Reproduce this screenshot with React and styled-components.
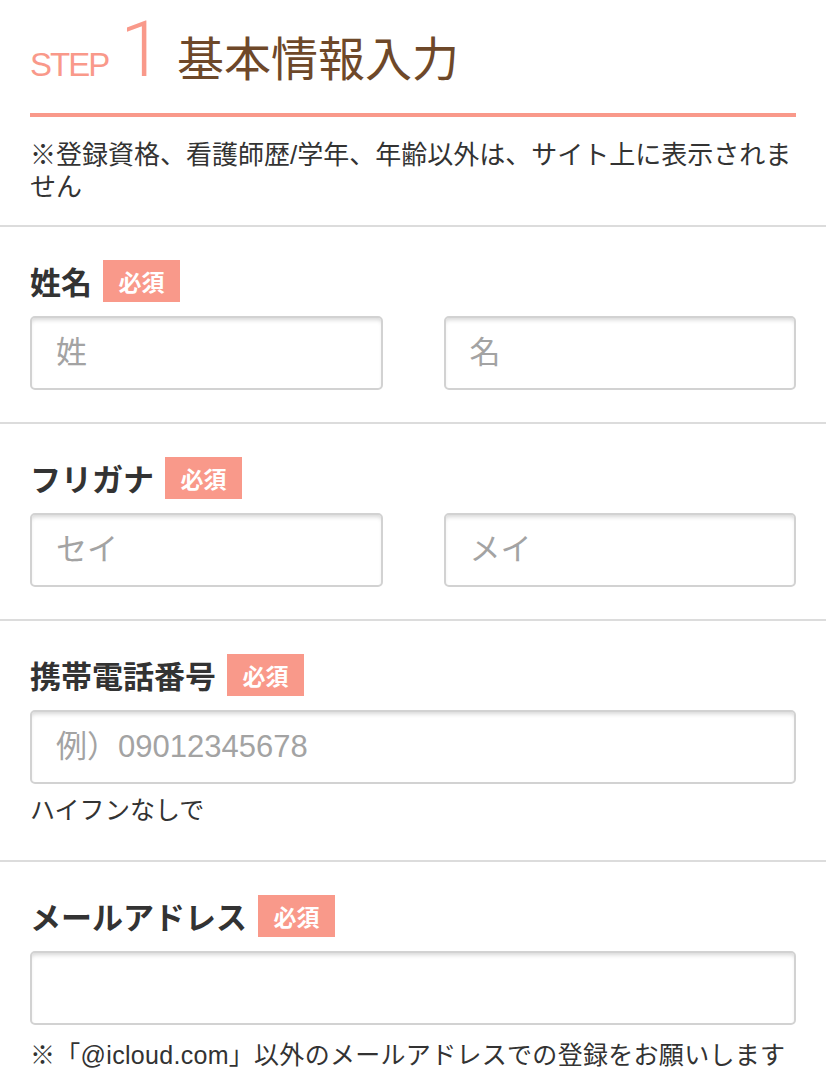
import styled, { createGlobalStyle } from "styled-components"

const GlobalStyle = createGlobalStyle`
  html, body {
    margin: 0;
    padding: 0;
    background: #fff;
  }
  body {
    font-family: "Liberation Sans", "Noto Sans CJK JP", sans-serif;
    color: #333;
  }
`

const Page = styled.div`
  width: 826px;
  background: #fff;
`

const Header = styled.header`
  padding: 0 30px 22px;
`

const Heading = styled.h1`
  display: flex;
  align-items: baseline;
  margin: 0;
  padding-top: 12px;
  height: 117px;
  box-sizing: border-box;
  border-bottom: 4px solid #f9998a;
  font-weight: normal;
`

const StepLabel = styled.span`
  font-family: "Liberation Sans", sans-serif;
  font-size: 33px;
  letter-spacing: -2px;
  color: #f9998a;
  line-height: 1;
`

const StepNum = styled.span`
  font-family: Roboto, "Liberation Sans", sans-serif;
  font-weight: 300;
  font-size: 77px;
  color: #f9998a;
  line-height: 1;
  margin: 0 14px 0 12px;
`

const Title = styled.span`
  font-family: "Noto Sans CJK JP", sans-serif;
  font-size: 47px;
  color: #6e4829;
  line-height: 1;
`

const Lead = styled.p`
  margin: 22px 0 0;
  font-size: 26px;
  line-height: 32px;
  color: #333;
`

const Section = styled.section`
  border-top: 2px solid #dcdcdc;
  padding: 33px 30px 32px;
`

const LabelRow = styled.div`
  display: flex;
  align-items: center;
  gap: 11px;
`

const Label = styled.span`
  font-family: "Noto Sans CJK JP", sans-serif;
  font-size: 31px;
  font-weight: 700;
  color: #333;
  line-height: 42px;
`

const Badge = styled.span`
  display: inline-flex;
  align-items: center;
  justify-content: center;
  width: 77px;
  height: 42px;
  background: #f9998a;
  color: #fff;
  font-family: "Noto Sans CJK JP", sans-serif;
  font-size: 23px;
  font-weight: 700;
`

const Fields = styled.div`
  display: grid;
  grid-template-columns: ${props => props.split ? "1fr 1fr" : "1fr"};
  gap: 61px;
  margin-top: 14px;
`

const Input = styled.input`
  box-sizing: border-box;
  width: 100%;
  height: 74px;
  border: 2px solid #d2d2d2;
  border-radius: 5px;
  box-shadow: inset 0 4px 4px -2px rgba(0, 0, 0, 0.16);
  padding: 0 24px;
  font-family: "Liberation Sans", "Noto Sans CJK JP", sans-serif;
  font-size: 31px;
  color: #333;
  background: #fff;
  outline: none;

  &::placeholder {
    color: #a3a3a3;
  }
`

const Hint = styled.p`
  margin: ${props => props.gap}px 0 0;
  font-size: 25px;
  letter-spacing: ${props => props.spread || 0}px;
  line-height: 36px;
  color: #333;
  white-space: nowrap;
`

const Field = ({ label, children }) => (
  <Section>
    <LabelRow>
      <Label>{label}</Label>
      <Badge>必須</Badge>
    </LabelRow>
    {children}
  </Section>
)

export default function App() {
  return (
    <Page>
      <GlobalStyle />
      <Header>
        <Heading>
          <StepLabel>STEP</StepLabel>
          <StepNum>1</StepNum>
          <Title>基本情報入力</Title>
        </Heading>
        <Lead>※登録資格、看護師歴/学年、年齢以外は、サイト上に表示されません</Lead>
      </Header>

      <Field label="姓名">
        <Fields split>
          <Input placeholder="姓" />
          <Input placeholder="名" />
        </Fields>
      </Field>

      <Field label="フリガナ">
        <Fields split>
          <Input placeholder="セイ" />
          <Input placeholder="メイ" />
        </Fields>
      </Field>

      <Field label="携帯電話番号">
        <Fields>
          <Input placeholder="例）09012345678" />
        </Fields>
        <Hint gap={8}>ハイフンなしで</Hint>
      </Field>

      <Field label="メールアドレス">
        <Fields>
          <Input type="email" />
        </Fields>
        <Hint gap={12} spread={0.3}>※「@icloud.com」以外のメールアドレスでの登録をお願いします</Hint>
      </Field>
    </Page>
  )
}
